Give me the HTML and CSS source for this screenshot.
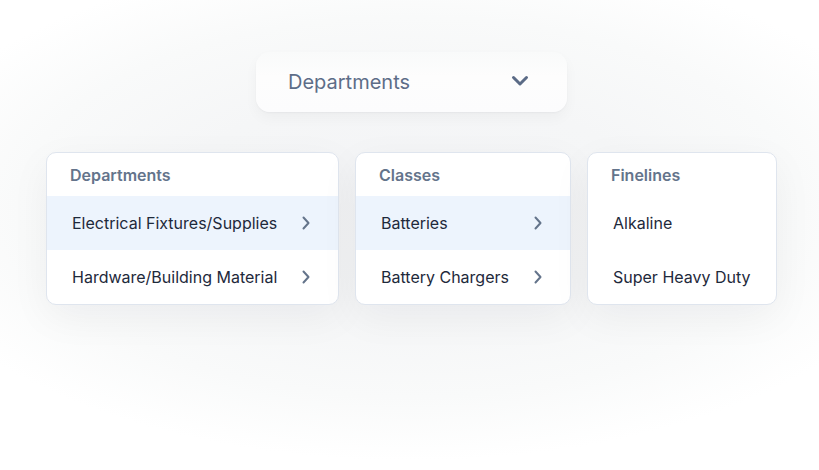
FILE: index.html
```html
<!DOCTYPE html>
<html>
<head>
<meta charset="utf-8">
<link rel="stylesheet" href="styles.css">
</head>
<body>
<div class="page">
  <div class="dropdown">
    <span class="dd-label">Departments</span>
    <svg class="dd-chev" width="18" height="12" viewBox="0 0 18 12"><path d="M2.5 2.5l6.5 6.5 6.5-6.5" fill="none" stroke="#5b6b86" stroke-width="3" stroke-linecap="round" stroke-linejoin="round"/></svg>
  </div>
  <div class="columns">
    <div class="card c1">
      <div class="head">Departments</div>
      <div class="row active"><span>Electrical Fixtures/Supplies</span><svg class="chev" width="10" height="14" viewBox="0 0 10 14"><path d="M2.5 1.5l5 5.5-5 5.5" fill="none" stroke="#64748b" stroke-width="2" stroke-linecap="round" stroke-linejoin="round"/></svg></div>
      <div class="row"><span>Hardware/Building Material</span><svg class="chev" width="10" height="14" viewBox="0 0 10 14"><path d="M2.5 1.5l5 5.5-5 5.5" fill="none" stroke="#64748b" stroke-width="2" stroke-linecap="round" stroke-linejoin="round"/></svg></div>
    </div>
    <div class="card c2">
      <div class="head">Classes</div>
      <div class="row active"><span>Batteries</span><svg class="chev" width="10" height="14" viewBox="0 0 10 14"><path d="M2.5 1.5l5 5.5-5 5.5" fill="none" stroke="#64748b" stroke-width="2" stroke-linecap="round" stroke-linejoin="round"/></svg></div>
      <div class="row"><span>Battery Chargers</span><svg class="chev" width="10" height="14" viewBox="0 0 10 14"><path d="M2.5 1.5l5 5.5-5 5.5" fill="none" stroke="#64748b" stroke-width="2" stroke-linecap="round" stroke-linejoin="round"/></svg></div>
    </div>
    <div class="card c3">
      <div class="head">Finelines</div>
      <div class="row"><span>Alkaline</span></div>
      <div class="row"><span>Super Heavy Duty</span></div>
    </div>
  </div>
</div>
</body>
</html>
```
FILE: styles.css
```css
html, body { margin: 0; padding: 0; }
body {
  font-family: Inter, "Noto Sans", sans-serif;
  width: 819px;
  height: 470px;
  overflow: hidden;
  background: #ffffff radial-gradient(ellipse 64% 54% at 50% 44%, #f3f4f6 0%, #f5f6f7 45%, #f9fafa 75%, #ffffff 100%);
}
.page { padding-top: 52px; }
.dropdown {
  margin-left: 256px;
  width: 311px;
  height: 60px;
  box-sizing: border-box;
  border-radius: 14px;
  background: linear-gradient(#f9fafa, #fdfdfd 40%, #fcfcfd);
  box-shadow: 0 6px 14px rgba(15, 23, 42, 0.035), 0 1px 2px rgba(15, 23, 42, 0.04);
  display: flex;
  align-items: center;
  padding: 0 38px 0 32px;
  justify-content: space-between;
}
.dd-label { font-size: 20px; color: #5d6d88; }
.dd-chev { margin-top: -3px; }
.columns {
  margin-top: 40px;
  margin-left: 46px;
  display: flex;
  gap: 16px;
  align-items: flex-start;
}
.card {
  box-sizing: border-box;
  height: 153px;
  background: #ffffff;
  border: 1px solid #dfe5ee;
  border-radius: 10px;
  box-shadow: 0 12px 40px rgba(15, 23, 42, 0.05);
  overflow: hidden;
}
.c1 { width: 293px; }
.c2 { width: 216px; }
.c3 { width: 190px; }
.head {
  height: 43px;
  box-sizing: border-box;
  padding: 12px 0 0 23px;
  font-size: 16px;
  font-weight: 600;
  color: #64748b;
}
.row {
  height: 54px;
  display: flex;
  align-items: center;
  justify-content: space-between;
  padding: 0 27px 0 25px;
  font-size: 16px;
  color: #1e293b;
  white-space: nowrap;
}
.row.active { background: #edf4fd; }
.chev { flex: none; }
```
